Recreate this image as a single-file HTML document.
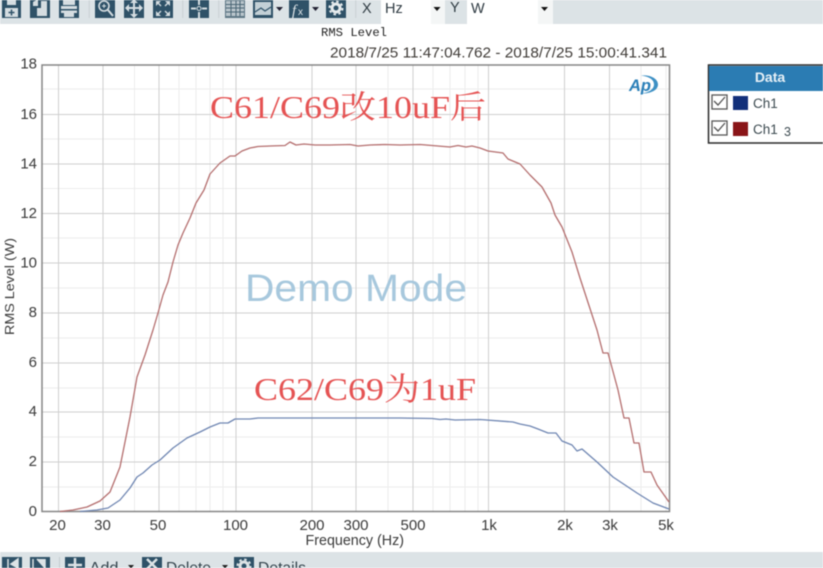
<!DOCTYPE html>
<html>
<head>
<meta charset="utf-8">
<style>
html,body{margin:0;padding:0;background:#fff;}
body{width:823px;height:568px;overflow:hidden;position:relative;font-family:"Liberation Sans",sans-serif;}
svg{position:absolute;left:0;top:0;filter:blur(0.4px);}
</style>
</head>
<body>
<svg width="823" height="568" viewBox="0 0 823 568" xmlns="http://www.w3.org/2000/svg">
<!-- top toolbar -->
<rect x="0" y="0" width="823" height="24" fill="#dce3e6"/>
<rect x="381" y="0" width="64" height="24" fill="#fff"/>
<rect x="431" y="0" width="14" height="24" fill="#f4f6f6"/>
<rect x="467" y="0" width="86" height="24" fill="#fff"/>
<rect x="538" y="0" width="15" height="24" fill="#f4f6f6"/>
<g fill="#2f5268">
 <rect x="2" y="-2" width="19" height="20"/>
 <rect x="30" y="-2" width="20" height="20"/>
 <rect x="59" y="-2" width="20" height="20"/>
 <rect x="95" y="-2" width="20" height="20"/>
 <rect x="124" y="-2" width="20" height="20"/>
 <rect x="153" y="-2" width="20" height="20"/>
 <rect x="189" y="-2" width="20" height="20"/>
 <rect x="253" y="-2" width="20" height="20"/>
 <rect x="289" y="-2" width="20" height="20"/>
 <rect x="326" y="-2" width="20" height="20"/>
</g>
<g fill="#d5dde1">
 <path d="M7 0h9v5H7zM5 8h13v9H5z"/>
 <path d="M33 2l5-3v7h-5zM41 1h6v15h-10V8h4z"/>
 <path d="M63 0h12v5H63zM61 6h16v7H61zM64 12h10v5H64z"/>
</g>
<path d="M11.500 9.500v6M8.500 12.500h6" stroke="#2f5268" stroke-width="1.500"/>
<rect x="61" y="9" width="16" height="1.500" fill="#2f5268"/>
<circle cx="104" cy="6" r="5" fill="none" stroke="#d5dde1" stroke-width="1.600"/>
<path d="M108 10l5 6" stroke="#d5dde1" stroke-width="2"/>
<path d="M102 6h4M104 4v4" stroke="#d5dde1" stroke-width="1"/>
<path d="M134 0v17M126 8h16" stroke="#d5dde1" stroke-width="2"/>
<path d="M130 3l4-4 4 4zM130 14l4 4 4-4zM129 4l-4 4 4 4zM139 4l4 4-4 4z" fill="#d5dde1"/>
<path d="M156 1l5 0-5 5zM170 1l-5 0 5 5zM156 16l5 0-5-5zM170 16l-5 0 5-5z" fill="#d5dde1"/>
<path d="M158 3l3 3M168 3l-3 3M158 14l3-3M168 14l-3-3" stroke="#d5dde1" stroke-width="1.400"/>
<path d="M199 0v5M199 12v6M191 8.500h5M202 8.500h5" stroke="#d5dde1" stroke-width="2"/>
<circle cx="199" cy="8.500" r="2" fill="none" stroke="#d5dde1" stroke-width="1"/>
<rect x="225" y="-2" width="20" height="20" fill="#5d7785"/>
<rect x="226" y="1" width="18" height="15" fill="#b9c5cb"/>
<path d="M226 4.500h18M226 8h18M226 12h18M231 0v16M236 0v16M240 0v16" stroke="#4a6575" stroke-width="1"/>
<rect x="255" y="2" width="16" height="13" fill="#c3d0d6"/>
<path d="M255 12l6-4 4 3 6-4" fill="none" stroke="#2f5268" stroke-width="1.200"/>
<path d="M276 7h7l-3.500 4zM312 7h7l-3.500 4z" fill="#223"/>
<text x="292" y="15" font-family="Liberation Serif" font-style="italic" font-size="15" fill="#e0e6e9">f</text>
<text x="298" y="15" font-family="Liberation Sans" font-size="10" fill="#e0e6e9">x</text>
<circle cx="336" cy="8" r="5.500" fill="#e6ebed"/>
<circle cx="336" cy="8" r="6.500" fill="none" stroke="#e6ebed" stroke-width="2" stroke-dasharray="2.500 2.600"/>
<circle cx="336" cy="8" r="2.500" fill="#2f5268"/>
<rect x="88.500" y="0" width="1.500" height="18" fill="#cfd6d9"/>
<rect x="182" y="0" width="1.500" height="18" fill="#cfd6d9"/>
<rect x="218" y="0" width="1.500" height="18" fill="#cfd6d9"/>
<rect x="355" y="0" width="1.500" height="18" fill="#cfd6d9"/>
<text x="362" y="13" font-size="14.500" fill="#2e3a42">X</text>
<text x="385" y="13" font-size="14.500" fill="#2e3a42">Hz</text>
<path d="M433.500 7h7l-3.500 4zM541 7h7l-3.500 4z" fill="#111"/>
<text x="450" y="12" font-size="14.500" fill="#2e3a42">Y</text>
<text x="471" y="13" font-size="14.500" fill="#2e3a42">W</text>

<!-- titles -->
<text x="321" y="36" font-family="Liberation Mono" font-size="11.500" fill="#222" textLength="66" lengthAdjust="spacingAndGlyphs">RMS Level</text>
<text x="330" y="57.500" font-size="14.500" fill="#403c38" textLength="337" lengthAdjust="spacingAndGlyphs">2018/7/25 11:47:04.762 - 2018/7/25 15:00:41.341</text>

<!-- grid minor -->
<g stroke="#ececec" stroke-width="1">
 <path d="M42 89H669M42 139H669M42 188.500H669M42 238H669M42 288H669M42 338H669M42 388H669M42 437H669M42 487H669"/>
 <path d="M134.500 65V511M179 65V511M196 65V511M210 65V511M223 65V511M388 65V511M433 65V511M450 65V511M465 65V511M478 65V511M641 65V511M666 65V511"/>
</g>
<g stroke="#cfcfcf" stroke-width="1">
 <path d="M42 114.500H669M42 164H669M42 213.500H669M42 263H669M42 313H669M42 363H669M42 412H669M42 462H669"/>
 <path d="M58.500 65V511M103 65V511M159 65V511M236 65V511M312 65V511M356 65V511M413 65V511M488.500 65V511M564.500 65V511M609.500 65V511"/>
</g>
<rect x="42" y="65" width="627.500" height="446.500" fill="none" stroke="#858585" stroke-width="1.500"/>

<!-- curves -->
<polyline fill="none" stroke="#b46e6e" stroke-width="1.300" stroke-linejoin="round" points="60,511.500 73,510 87,507 100,501 110,492 120,467 130,417 137,377 145,355 153,330 158,313 163,295 168,282 173,262 178,245 183,233 190,218 196,203 204,190 210,174 220,163 230,156 235,156 242,151 250,148 258,146.500 270,146 285,145.500 290,142 296,145 304,144 315,145 330,145 350,144.500 358,146 370,145 385,144.500 400,145 420,144.500 438,146 450,147 458,145.500 466,147 472,146 480,148 488,151 503,153 508,159 520,164 530,175 542,187 551,203 555,215 562,227 572,252 580,278 597,330 603,353 608,353 618,390 624,418 629,418 634,443 639,443 644,472 651,472 657,485 669,502"/>
<polyline fill="none" stroke="#6f86b2" stroke-width="1.300" stroke-linejoin="round" points="80,511.500 97,510 108,508 120,500 130,488 137,477 143,473 152,465 160,460 173,448 187,438 200,432 210,427 220,423 228,423 235,419 250,419 258,418 300,418 400,418 432,418.500 440,419.500 446,419 455,420 480,419.500 513,422 520,424 530,426 538,429 548,433 556,433 562,441 572,445 577,451 582,449 597,462 613,477 637,493 653,503 669,509"/>

<!-- axis labels -->
<g font-size="15" fill="#3a3a3a" text-anchor="end">
 <text x="37" y="68.500">18</text><text x="37" y="119">16</text><text x="37" y="168.500">14</text><text x="37" y="218">12</text><text x="37" y="267.500">10</text><text x="37" y="317">8</text><text x="37" y="367">6</text><text x="37" y="416">4</text><text x="37" y="466">2</text><text x="37" y="516">0</text>
</g>
<g font-size="15" fill="#3a3a3a" text-anchor="middle">
 <text x="57.500" y="530">20</text><text x="102.500" y="530">30</text><text x="158" y="530">50</text><text x="235.500" y="530">100</text><text x="312" y="530">200</text><text x="356" y="530">300</text><text x="413" y="530">500</text><text x="489" y="530">1k</text><text x="565" y="530">2k</text><text x="610" y="530">3k</text><text x="666" y="530">5k</text>
</g>
<text x="305.500" y="545" font-size="14.500" fill="#3a3a3a" textLength="98.500" lengthAdjust="spacingAndGlyphs">Frequency (Hz)</text>
<text transform="translate(14,335) rotate(-90)" font-size="12.500" fill="#3a3a3a" textLength="97" lengthAdjust="spacingAndGlyphs">RMS Level (W)</text>

<!-- annotations -->
<text x="210" y="118" font-family="Liberation Serif,Noto Serif CJK SC,serif" font-size="32" fill="#e55353" textLength="276" lengthAdjust="spacingAndGlyphs">C61/C69改10uF后</text>
<text x="254" y="400" font-family="Liberation Serif,Noto Serif CJK SC,serif" font-size="32" fill="#e55353" textLength="222" lengthAdjust="spacingAndGlyphs">C62/C69为1uF</text>
<text x="245" y="301" font-size="38" fill="#a7c8dd" textLength="222" lengthAdjust="spacingAndGlyphs">Demo Mode</text>

<!-- AP logo -->
<text x="629" y="91" font-size="17" font-weight="bold" font-style="italic" fill="#2a7fb8" textLength="22" lengthAdjust="spacingAndGlyphs">Ap</text>
<path d="M641 75.500c9-1 17 3 17 9s-8 9.500-18 9c8-.5 14-4 14-9s-5-8-13-9z" fill="#3d90c4"/>

<!-- data panel -->
<rect x="708.500" y="65" width="120" height="78" fill="#fff" stroke="#2a2a2a" stroke-width="1.500"/>
<rect x="709" y="66" width="114" height="25" fill="#2b7cb3"/>
<text x="770" y="82" font-size="14" font-weight="bold" fill="#e8f1f7" text-anchor="middle">Data</text>
<rect x="712" y="95" width="15" height="14" fill="#fff" stroke="#555" stroke-width="1.300"/>
<path d="M714 101l4 4 7-8" fill="none" stroke="#555" stroke-width="1.300"/>
<rect x="733" y="96" width="15" height="14" fill="#12307a"/>
<text x="753" y="108" font-size="13.500" fill="#3c4a50">Ch1</text>
<rect x="712" y="121" width="15" height="14" fill="#fff" stroke="#555" stroke-width="1.300"/>
<path d="M714 127l4 4 7-8" fill="none" stroke="#555" stroke-width="1.300"/>
<rect x="733" y="122" width="15" height="14" fill="#8a1518"/>
<text x="753" y="134" font-size="13.500" fill="#3c4a50">Ch1</text>
<text x="784" y="136" font-size="12.500" fill="#3c4a50">3</text>

<!-- bottom toolbar -->
<rect x="0" y="552" width="823" height="16" fill="#dce3e6"/>
<g fill="#2f5268">
 <rect x="2" y="557" width="20" height="14"/>
 <rect x="30" y="557" width="20" height="14"/>
 <rect x="65" y="557" width="20" height="14"/>
 <rect x="142" y="557" width="20" height="14"/>
 <rect x="234" y="557" width="20" height="14"/>
</g>
<path d="M8 559v9M18 559l-7 5 7 4zM33 559v9M37 559l8 9v-9" fill="#dce3e6" stroke="#dce3e6" stroke-width="1.500"/>
<path d="M75 558v12M68 565h14" stroke="#dce3e6" stroke-width="2.500"/>
<path d="M147 559l10 10M157 559l-10 10" stroke="#dce3e6" stroke-width="2.500"/>
<circle cx="244" cy="566" r="5.500" fill="#dce3e6"/><circle cx="244" cy="566" r="6.500" fill="none" stroke="#dce3e6" stroke-width="2" stroke-dasharray="2.500 2.600"/><circle cx="244" cy="566" r="2.500" fill="#2f5268"/>
<rect x="59" y="557" width="1" height="11" fill="#c4ccd0"/>
<g font-size="16" fill="#33434c">
 <text x="89.500" y="573" textLength="29" lengthAdjust="spacingAndGlyphs">Add</text>
 <text x="166" y="573" textLength="45" lengthAdjust="spacingAndGlyphs">Delete</text>
 <text x="258" y="573" textLength="48" lengthAdjust="spacingAndGlyphs">Details</text>
</g>
<path d="M128 565h6l-3 3.500zM222 565h6l-3 3.500z" fill="#222"/>
</svg>
</body>
</html>
